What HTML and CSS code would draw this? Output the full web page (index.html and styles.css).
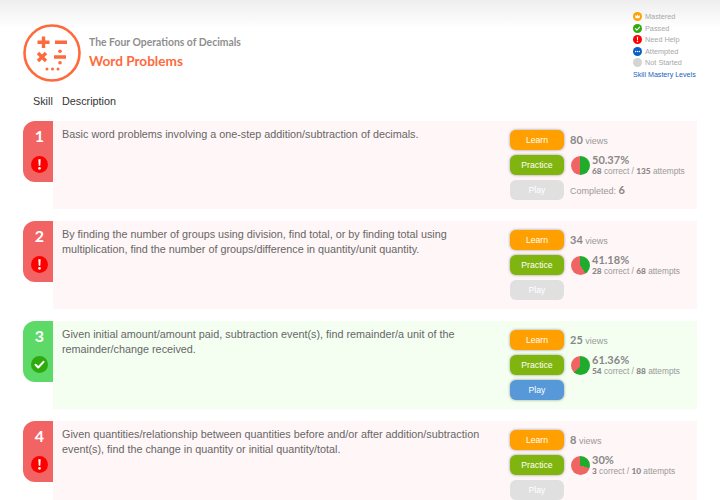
FILE: index.html
```html
<!DOCTYPE html>
<html lang="en">
<head>
    <meta charset="UTF-8">
    <meta name="viewport" content="width=device-width, initial-scale=1.0">
    <title>Word Problems</title>
    <link rel="stylesheet" href="styles.css">
</head>
<body>
    <svg class="defs" width="0" height="0">
        <symbol id="icon-help" viewBox="0 0 20 20">
            <circle cx="10" cy="10" r="10" fill="#f00"/>
            <path d="M8.600 3.800h2.800l-.5 7.800H9.100z" fill="#fff"/>
            <circle cx="10" cy="14.500" r="1.600" fill="#fff"/>
        </symbol>
        <symbol id="icon-pass" viewBox="0 0 20 20">
            <circle cx="10" cy="10" r="10" fill="#2eaa0e"/>
            <path d="M5.300 10.400l3.200 3.100 6.200-6.600" fill="none" stroke="#fff" stroke-width="2.400" stroke-linecap="round" stroke-linejoin="round"/>
        </symbol>
        <symbol id="icon-master" viewBox="0 0 20 20">
            <circle cx="10" cy="10" r="10" fill="#ffa000"/>
            <path d="M4.500 6.500l3 2.700L10 5l2.500 4.200 3-2.700-1 7.500h-9z" fill="#fff"/>
        </symbol>
        <symbol id="icon-attempt" viewBox="0 0 20 20">
            <circle cx="10" cy="10" r="10" fill="#0a5fc4"/>
            <circle cx="5.800" cy="10" r="1.500" fill="#fff"/>
            <circle cx="10" cy="10" r="1.500" fill="#fff"/>
            <circle cx="14.200" cy="10" r="1.500" fill="#fff"/>
        </symbol>
        <symbol id="icon-none" viewBox="0 0 20 20">
            <circle cx="10" cy="10" r="10" fill="#d4d4d4"/>
        </symbol>
    </svg>

    <div class="header">
        <div class="title-block">
            <svg class="logo" viewBox="0 0 58 58">
                <circle cx="29" cy="29" r="27.500" fill="none" stroke="#ff6a3c" stroke-width="2.600"/>
                <path d="M20.500 12.500v11.500M14.500 18.200h12M32 18.200h12M15 29l8 8M23 29l-8 8M31 33h12" fill="none" stroke="#ff6a3c" stroke-width="3.400"/>
                <circle cx="37" cy="27.200" r="1.800" fill="#ff6a3c"/>
                <circle cx="37" cy="38.800" r="1.800" fill="#ff6a3c"/>
                <circle cx="24" cy="45" r="1.500" fill="#ff6a3c"/>
                <circle cx="29.500" cy="45" r="1.500" fill="#ff6a3c"/>
                <circle cx="35" cy="45" r="1.500" fill="#ff6a3c"/>
            </svg>
            <div>
                <div class="subtitle">The Four Operations of Decimals</div>
                <h1>Word Problems</h1>
            </div>
        </div>
        <div class="legend">
            <div class="legend-item"><svg class="legend-icon"><use href="#icon-master"/></svg>Mastered</div>
            <div class="legend-item"><svg class="legend-icon"><use href="#icon-pass"/></svg>Passed</div>
            <div class="legend-item"><svg class="legend-icon"><use href="#icon-help"/></svg>Need Help</div>
            <div class="legend-item"><svg class="legend-icon"><use href="#icon-attempt"/></svg>Attempted</div>
            <div class="legend-item"><svg class="legend-icon"><use href="#icon-none"/></svg>Not Started</div>
            <a class="legend-link" href="#">Skill Mastery Levels</a>
        </div>
    </div>

    <div class="columns">
        <span class="col-skill">Skill</span>
        <span>Description</span>
    </div>

    <div class="skill">
        <div class="tab">
            <span class="num">1</span>
            <svg class="status"><use href="#icon-help"/></svg>
        </div>
        <div class="card">
            <p class="desc">Basic word problems involving a one-step addition/subtraction of decimals.</p>
            <div class="actions">
                <a class="btn learn">Learn</a>
                <div class="views"><b>80</b> views</div>
                <a class="btn practice">Practice</a>
                <div class="score">
                    <div class="pie" style="background: conic-gradient(#1fab2c 0 50.37%, #f06464 0)"></div>
                    <div>
                        <div class="pct">50.37%</div>
                        <div class="attempts"><b>68</b> correct / <b>135</b> attempts</div>
                    </div>
                </div>
                <a class="btn off">Play</a>
                <div class="views">Completed: <b>6</b></div>
            </div>
        </div>
    </div>

    <div class="skill">
        <div class="tab">
            <span class="num">2</span>
            <svg class="status"><use href="#icon-help"/></svg>
        </div>
        <div class="card">
            <p class="desc">By finding the number of groups using division, find total, or by finding total using multiplication, find the number of groups/difference in quantity/unit quantity.</p>
            <div class="actions">
                <a class="btn learn">Learn</a>
                <div class="views"><b>34</b> views</div>
                <a class="btn practice">Practice</a>
                <div class="score">
                    <div class="pie" style="background: conic-gradient(#1fab2c 0 41.18%, #f06464 0)"></div>
                    <div>
                        <div class="pct">41.18%</div>
                        <div class="attempts"><b>28</b> correct / <b>68</b> attempts</div>
                    </div>
                </div>
                <a class="btn off">Play</a>
                <div></div>
            </div>
        </div>
    </div>

    <div class="skill passed">
        <div class="tab">
            <span class="num">3</span>
            <svg class="status"><use href="#icon-pass"/></svg>
        </div>
        <div class="card">
            <p class="desc">Given initial amount/amount paid, subtraction event(s), find remainder/a unit of the remainder/change received.</p>
            <div class="actions">
                <a class="btn learn">Learn</a>
                <div class="views"><b>25</b> views</div>
                <a class="btn practice">Practice</a>
                <div class="score">
                    <div class="pie" style="background: conic-gradient(#1fab2c 0 61.36%, #f06464 0)"></div>
                    <div>
                        <div class="pct">61.36%</div>
                        <div class="attempts"><b>54</b> correct / <b>88</b> attempts</div>
                    </div>
                </div>
                <a class="btn play">Play</a>
                <div></div>
            </div>
        </div>
    </div>

    <div class="skill">
        <div class="tab">
            <span class="num">4</span>
            <svg class="status"><use href="#icon-help"/></svg>
        </div>
        <div class="card">
            <p class="desc">Given quantities/relationship between quantities before and/or after addition/subtraction event(s), find the change in quantity or initial quantity/total.</p>
            <div class="actions">
                <a class="btn learn">Learn</a>
                <div class="views"><b>8</b> views</div>
                <a class="btn practice">Practice</a>
                <div class="score">
                    <div class="pie" style="background: conic-gradient(#1fab2c 0 30%, #f06464 0)"></div>
                    <div>
                        <div class="pct">30%</div>
                        <div class="attempts"><b>3</b> correct / <b>10</b> attempts</div>
                    </div>
                </div>
                <a class="btn off">Play</a>
                <div></div>
            </div>
        </div>
    </div>
</body>
</html>
```

FILE: styles.css
```css
html {
    overflow: hidden;
}
body {
    font-family: 'Liberation Sans', Arial, sans-serif;
    font-size: 10.8px;
    color: #333;
    margin: 0;
    padding: 0 23px;
    background: linear-gradient(#eeeeee, #ffffff 28px) no-repeat;
}
.defs {
    display: block;
    height: 0;
}
.header {
    display: flex;
    justify-content: space-between;
    padding-top: 11px;
    height: 77px;
}
.title-block {
    display: flex;
    align-items: center;
    gap: 8px;
    height: 58px;
    margin-top: 13px;
}
.logo {
    width: 58px;
    height: 58px;
    flex: none;
}
.subtitle {
    font-family: Lato, sans-serif;
    font-weight: 700;
    font-size: 10.4px;
    color: #8f8f8f;
    margin-bottom: 5px;
}
h1 {
    font-family: Lato, sans-serif;
    font-weight: 700;
    font-size: 13.6px;
    line-height: 17px;
    color: #ff6a3c;
    margin: 0;
}
.legend {
    width: 64px;
    font-size: 7.3px;
    color: #a8a8a8;
}
.legend-item {
    display: flex;
    align-items: center;
    gap: 3px;
    height: 11.5px;
}
.legend-icon {
    width: 9px;
    height: 9px;
    flex: none;
}
.legend-link {
    display: block;
    margin-top: 1px;
    white-space: nowrap;
    font-size: 7.1px;
    color: #1a5fc0;
    text-decoration: none;
    line-height: 11px;
}
.columns {
    display: flex;
    height: 33px;
    line-height: 27px;
    padding-left: 10px;
}
.col-skill {
    width: 29px;
}
.skill {
    display: flex;
    height: 88px;
    margin-bottom: 12px;
    color: #666;
}
.tab {
    width: 30px;
    height: 61px;
    flex: none;
    box-sizing: border-box;
    padding-left: 3px;
    display: flex;
    flex-direction: column;
    align-items: center;
    background: #f26464;
    border-radius: 12px 0 0 12px;
}
.num {
    font-family: Lato, sans-serif;
    font-weight: 700;
    font-size: 16px;
    line-height: 18px;
    margin-top: 6px;
    color: #fff;
}
.status {
    width: 17px;
    height: 17px;
    margin-top: 11px;
}
.card {
    flex: 1;
    display: flex;
    justify-content: space-between;
    background: #fff6f7;
    padding: 0 12px 0 9px;
}
.desc {
    width: 424px;
    margin: 6px 0 0;
    line-height: 15px;
}
.actions {
    display: grid;
    grid-template-columns: 54px 1fr;
    grid-auto-rows: 20px;
    row-gap: 5px;
    column-gap: 6px;
    width: 175px;
    padding-top: 9px;
    align-items: center;
}
.btn {
    display: block;
    height: 20px;
    line-height: 20px;
    text-align: center;
    font-size: 8.700px;
    color: #fff;
    border-radius: 6px;
    box-shadow: 0 0 3px rgba(0, 0, 0, 0.4);
}
.learn {
    background: #ffa000;
}
.practice {
    background: #7fb50e;
}
.play {
    background: #5698d8;
}
.off {
    background: #e0e0e0;
    box-shadow: none;
}
.views {
    font-size: 9px;
    line-height: 12px;
    color: #999;
}
.views b {
    font-family: Lato, sans-serif;
    font-size: 11px;
    color: #888;
}
.score {
    display: flex;
    align-items: center;
    gap: 2px;
    padding-left: 1px;
    white-space: nowrap;
}
.pie {
    width: 19px;
    height: 19px;
    border-radius: 50%;
    flex: none;
}
.pct {
    font-family: Lato, sans-serif;
    font-weight: 700;
    font-size: 11px;
    line-height: 12px;
    color: #888;
}
.attempts {
    font-size: 8.300px;
    line-height: 10px;
    color: #999;
}
.attempts b {
    font-family: Lato, sans-serif;
    font-weight: 900;
    color: #888;
}
.passed .tab {
    background: #5cd966;
}
.passed .card {
    background: #f4fff2;
}
```
